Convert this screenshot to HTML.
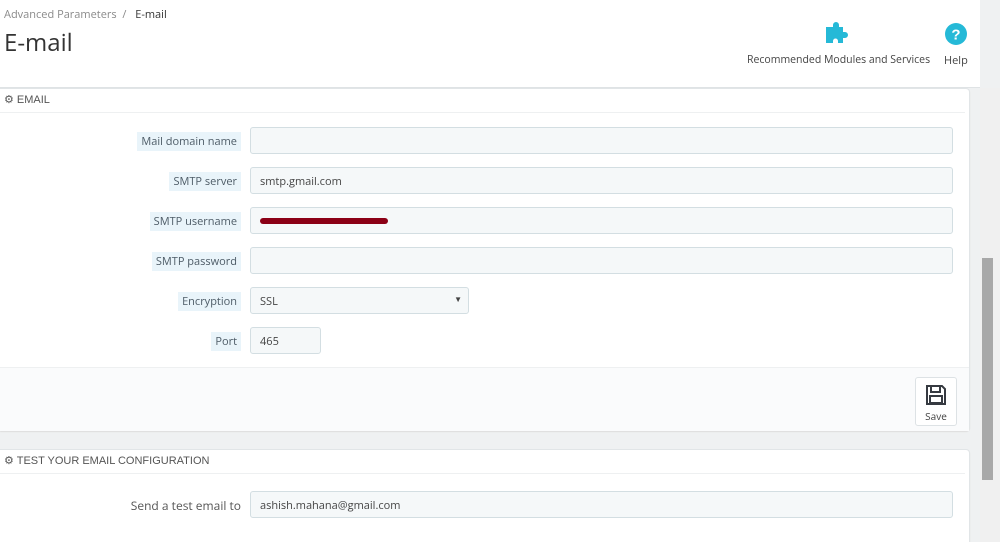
<!DOCTYPE html>
<html><head><style>
*{margin:0;padding:0;box-sizing:border-box}
html,body{width:1000px;height:542px;overflow:hidden}
body{background:#eff1f2;font-family:"Open Sans","Liberation Sans",sans-serif;position:relative;color:#555}
.abs{position:absolute}
#hdr{left:0;top:0;width:980px;height:88px;background:#fff;border-bottom:1px solid #dfe3e5}
.bc{left:4px;top:7px;font-size:11px;color:#8a8a8a}
.bc b{font-weight:normal;color:#333;margin-left:6px}
h1{position:absolute;left:4px;top:26px;font-size:24px;font-weight:normal;color:#333}
.tb{font-size:11px;color:#444}
.panel{background:#fff;left:0;width:970px;border:1px solid #e1e5e7;border-left:none;border-radius:0 4px 4px 0;box-shadow:0 1px 1px #ddd}
.ph{height:24px;border-bottom:1px solid #eef0f1;font-family:"Liberation Sans Narrow","Liberation Sans",sans-serif;font-size:11px;color:#555;padding:4px 0 0 4px;text-transform:uppercase;margin-right:4px}
.lbl{font-size:11px;color:#4d5b66;background:#e9f4fa;padding:2px 4px;right:759px;line-height:15px;white-space:nowrap}
.inp{left:250px;height:27px;background:#f5f8f9;border:1px solid #d3dee2;border-radius:3px;font-size:11px;color:#444;padding:6px 0 0 9px}
</style></head><body>
<div id="hdr" class="abs">
<div class="abs bc">Advanced Parameters &nbsp;/ <b>E-mail</b></div>
<h1>E-mail</h1>
<svg class="abs" style="left:826px;top:22px" width="24" height="24" viewBox="0 0 24 24"><path fill="#25b9d7" d="M0 5h7V3a3 3 0 0 1 6 0v2h4v5h2a3 3 0 0 1 0 6h-2v5h-5v-2a2.5 2.5 0 0 0-5 0v2H0z"/></svg>
<div class="abs tb" style="left:747px;top:53px;font-size:10.5px">Recommended Modules and Services</div>
<svg class="abs" style="left:945px;top:23px" width="22" height="22" viewBox="0 0 22 22"><circle cx="11" cy="11" r="11" fill="#25b9d7"/><text x="11" y="16.5" text-anchor="middle" font-family="Liberation Sans" font-weight="bold" font-size="15" fill="#fff">?</text></svg>
<div class="abs tb" style="left:944px;top:53px">Help</div>
</div>
<div class="abs" style="left:980px;top:88px;width:20px;height:454px;background:#f0f0f0"></div>
<div class="abs" style="left:982px;top:258px;width:11px;height:222px;background:#a8a8a8"></div>

<div class="abs panel" style="top:88px;height:343px">
<div class="ph">⚙ Email</div>
<div class="abs" style="left:0;top:278px;width:969px;height:64px;background:#fafbfc;border-top:1px solid #eef0f1"></div>
<div class="abs" style="left:915px;top:288px;width:42px;height:49px;background:#fff;border:1px solid #dde2e5;border-radius:3px;font-size:10px;text-align:center;color:#444;padding-top:6px">
<svg width="22" height="22" viewBox="0 0 22 22"><path d="M2 2h15l3 3v15H2z" fill="none" stroke="#363a41" stroke-width="2"/><rect x="6" y="2" width="9" height="6" fill="none" stroke="#363a41" stroke-width="2"/><rect x="5" y="12" width="12" height="7" fill="none" stroke="#363a41" stroke-width="2"/></svg><br>Save</div>
</div>
<div class="abs lbl" style="top:132px">Mail domain name</div>
<div class="abs inp" style="top:127px;width:703px"></div>
<div class="abs lbl" style="top:172px">SMTP server</div>
<div class="abs inp" style="top:167px;width:703px">smtp.gmail.com</div>
<div class="abs lbl" style="top:212px">SMTP username</div>
<div class="abs inp" style="top:207px;width:703px"><div style="width:128px;height:6px;background:#8b0016;border-radius:3px;margin-top:4px"></div></div>
<div class="abs lbl" style="top:252px">SMTP password</div>
<div class="abs inp" style="top:247px;width:703px"></div>
<div class="abs lbl" style="top:292px">Encryption</div>
<div class="abs inp" style="top:287px;width:219px">SSL<span style="position:absolute;right:6px;top:6px;font-size:8px">▼</span></div>
<div class="abs lbl" style="top:332px">Port</div>
<div class="abs inp" style="top:327px;width:71px">465</div>

<div class="abs panel" style="top:449px;height:110px">
<div class="ph">⚙ Test your email configuration</div>
</div>
<div class="abs" style="right:759px;top:497px;font-size:12px;color:#555">Send a test email to</div>
<div class="abs inp" style="top:491px;width:703px">ashish.mahana@gmail.com</div>
</body></html>
